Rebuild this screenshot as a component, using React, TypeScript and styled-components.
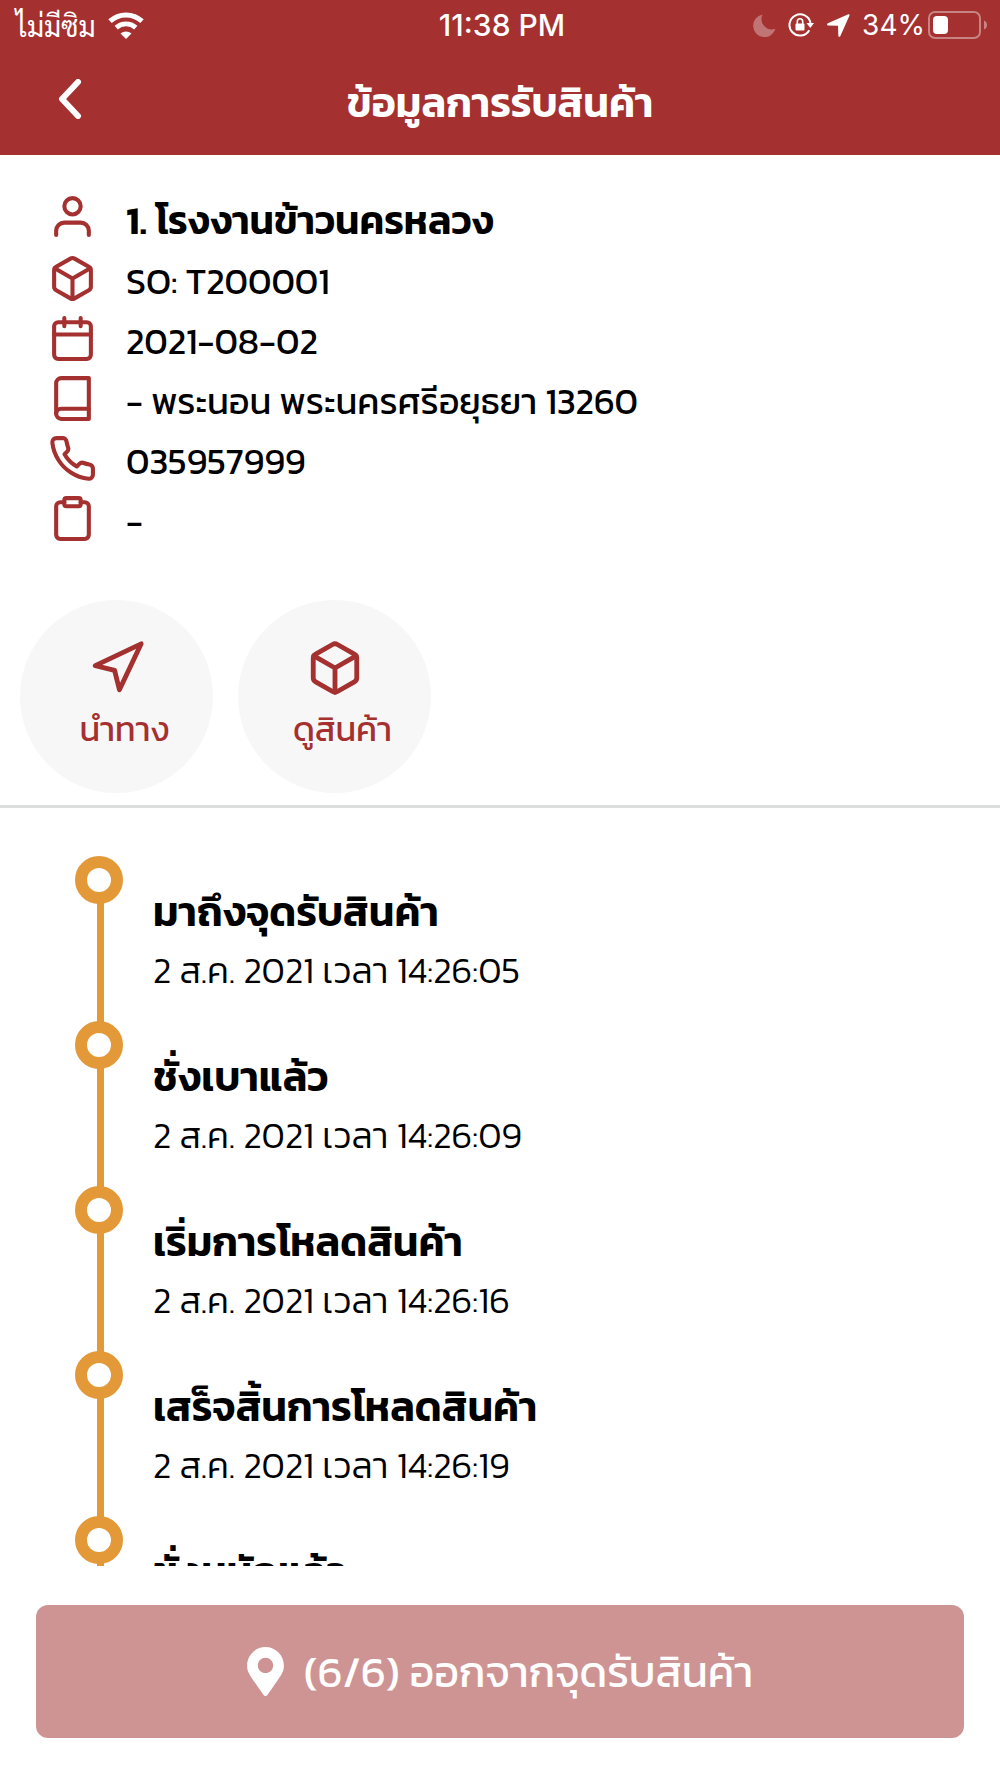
import React from "react";
import styled, { createGlobalStyle } from "styled-components";

const RED = "#a43030";
const ORANGE = "#e39937";
const THAI = `Kanit, Prompt, "Noto Sans Thai", "Noto Sans", sans-serif`;

const GlobalStyle = createGlobalStyle`
  *, *::before, *::after { box-sizing: border-box; }
  body { margin: 0; background: #fff; }
  h1, h2, p, ul, ol { margin: 0; padding: 0; }
  ul, ol { list-style: none; }
  button { border: 0; padding: 0; font: inherit; cursor: pointer; }
`;

const Screen = styled.div`
  display: flex;
  flex-direction: column;
  height: 100vh;
  color: #000;
  background: #fff;
  font-family: ${THAI};
`;

const Header = styled.header`
  flex: none;
  color: #fff;
  background: ${RED};
`;

const StatusBar = styled.div`
  display: grid;
  grid-template-columns: 1fr auto 1fr;
  align-items: center;
  height: 50px;
  padding: 0 12px 0 16px;
  font-family: Inter, "Liberation Sans", sans-serif;
  font-size: 28px;
  line-height: 32px;
`;

const StatusGroup = styled.div<{ $end?: boolean }>`
  display: flex;
  align-items: center;
  justify-content: ${(p) => (p.$end ? "flex-end" : "flex-start")};
  gap: 12px;
`;

const Carrier = styled.span`
  font-family: Sarabun, "Noto Sans", sans-serif;
`;

const Clock = styled.time`
  font-size: 30px;
  font-weight: 500;
`;

const Battery = styled.span`
  display: flex;
  align-items: center;
  gap: 3px;
`;

const TitleBar = styled.div`
  display: grid;
  grid-template-columns: 100px 1fr 100px;
  align-items: center;
  height: 105px;
  padding: 0 20px;
`;

const BackButton = styled.button`
  display: flex;
  align-items: center;
  justify-content: center;
  height: 60px;
  padding-bottom: 8px;
  color: inherit;
  background: none;
`;

const Title = styled.h1`
  font-size: 41px;
  font-weight: 600;
  line-height: 56px;
  text-align: center;
`;

const Info = styled.ul`
  flex: none;
  padding: 37px 48px 0;
`;

const InfoRow = styled.li<{ $lead?: boolean }>`
  display: flex;
  align-items: flex-start;
  gap: 29px;
  height: ${(p) => (p.$lead ? 62 : 60)}px;
  font-size: ${(p) => (p.$lead ? 39 : 36)}px;
  font-weight: ${(p) => (p.$lead ? 600 : 400)};
  line-height: ${(p) => (p.$lead ? 56 : 54)}px;

  svg {
    flex: none;
    color: ${RED};
  }
`;

const Actions = styled.div`
  display: flex;
  flex: none;
  gap: 25px;
  padding: 46px 20px 12px;
  border-bottom: 3px solid #dcdedd;
`;

const RoundAction = styled.button`
  display: flex;
  flex-direction: column;
  align-items: center;
  justify-content: flex-start;
  width: 193px;
  height: 193px;
  padding-top: 39px;
  border-radius: 50%;
  color: ${RED};
  background: #f7f7f7;
  font-size: 34px;
  line-height: 64px;

  span {
    padding-left: 16px;
  }
`;

const Timeline = styled.ol`
  flex: 1;
  min-height: 0;
  padding: 48px 40px 0 75px;
  overflow-y: auto;
  scrollbar-width: none;
`;

const Step = styled.li`
  display: flex;
  gap: 30px;
  min-height: 165px;
`;

const Rail = styled.div`
  display: flex;
  flex: none;
  flex-direction: column;
  align-items: center;
  width: 48px;
`;

const Ring = styled.span`
  width: 48px;
  height: 48px;
  border: 12px solid ${ORANGE};
  border-radius: 50%;
`;

const Line = styled.span`
  flex: 1;
  width: 7px;
  margin: -1px 0 -1px 3px;
  background: ${ORANGE};
`;

const StepBody = styled.div`
  padding-top: 26px;
`;

const StepTitle = styled.h2`
  font-size: 41px;
  font-weight: 600;
  line-height: 60px;
`;

const StepTime = styled.p`
  font-size: 36px;
  font-weight: 300;
  line-height: 56px;
`;

const Footer = styled.footer`
  flex: none;
  padding: 39px 36px 40px;
`;

const LeaveButton = styled.button`
  display: flex;
  align-items: center;
  justify-content: center;
  gap: 20px;
  width: 100%;
  height: 133px;
  border-radius: 12px;
  color: #fff;
  background: #ce9494;
  font-size: 43px;
  line-height: 60px;
`;

const icons = {
  user: (
    <>
      <path d="M20 21v-2a4 4 0 0 0-4-4H8a4 4 0 0 0-4 4v2" />
      <circle cx="12" cy="7" r="4" />
    </>
  ),
  box: (
    <>
      <path d="M21 16V8a2 2 0 0 0-1-1.73l-7-4a2 2 0 0 0-2 0l-7 4A2 2 0 0 0 3 8v8a2 2 0 0 0 1 1.73l7 4a2 2 0 0 0 2 0l7-4A2 2 0 0 0 21 16z" />
      <path d="M3.27 6.96 12 12.01l8.73-5.05M12 22.08V12" />
    </>
  ),
  calendar: (
    <>
      <rect x="3" y="4" width="18" height="18" rx="2" />
      <path d="M16 2v4M8 2v4M3 10h18" />
    </>
  ),
  book: (
    <>
      <path d="M4 19.5A2.5 2.5 0 0 1 6.5 17H20" />
      <path d="M6.5 2H20v20H6.5A2.5 2.5 0 0 1 4 19.5v-15A2.5 2.5 0 0 1 6.5 2z" />
    </>
  ),
  phone: (
    <path d="M22 16.92v3a2 2 0 0 1-2.18 2 19.79 19.79 0 0 1-8.63-3.07 19.5 19.5 0 0 1-6-6 19.79 19.79 0 0 1-3.07-8.67A2 2 0 0 1 4.11 2h3a2 2 0 0 1 2 1.72 12.84 12.84 0 0 0 .7 2.81 2 2 0 0 1-.45 2.11L8.09 9.91a16 16 0 0 0 6 6l1.27-1.27a2 2 0 0 1 2.11-.45 12.84 12.84 0 0 0 2.81.7A2 2 0 0 1 22 16.92z" />
  ),
  clipboard: (
    <>
      <path d="M16 4h2a2 2 0 0 1 2 2v14a2 2 0 0 1-2 2H6a2 2 0 0 1-2-2V6a2 2 0 0 1 2-2h2" />
      <rect x="8" y="2" width="8" height="4" rx="1" />
    </>
  ),
  navigation: <path d="M3 11 22 2l-9 19-2-8-8-2z" />,
};

type IconName = keyof typeof icons;

const Icon = ({ name, size = 49 }: { name: IconName; size?: number }) => (
  <svg
    width={size}
    height={size}
    viewBox="0 0 24 24"
    fill="none"
    stroke="currentColor"
    strokeWidth="2"
    strokeLinecap="round"
    strokeLinejoin="round"
    aria-hidden="true"
  >
    {icons[name]}
  </svg>
);

const WifiIcon = () => (
  <svg width="36" height="27" viewBox="0 0 36 27" fill="none" stroke="#fff" aria-hidden="true">
    <path d="M2 9.200C11 .8 25 .8 34 9.200" strokeWidth="5" />
    <path d="M8.200 15.600c5.600-5 14-5 19.600 0" strokeWidth="4.800" />
    <path d="M18 27l-5.500-5.500c3-2.700 8-2.700 11 0z" fill="#fff" stroke="none" />
  </svg>
);

const MoonIcon = () => (
  <svg width="23" height="23" viewBox="0 0 23 23" aria-hidden="true">
    <path d="M9.500.5A11.400 11.400 0 1 0 22.500 14.800 10.500 10.500 0 0 1 9.500.5z" fill="#c17474" />
  </svg>
);

const RotationLockIcon = () => (
  <svg width="27" height="24" viewBox="0 0 27 24" fill="none" stroke="#fff" aria-hidden="true">
    <path d="M21.300 17.200A10.600 10.600 0 1 1 22.500 10" strokeWidth="2" />
    <path d="M18.500 10H26l-3.700 5z" fill="#fff" stroke="none" />
    <rect x="7.500" y="10.500" width="9" height="7" rx="1" fill="#fff" stroke="none" />
    <path d="M9.300 11V8.500a2.700 2.700 0 0 1 5.400 0V11" strokeWidth="1.600" />
  </svg>
);

const LocationArrowIcon = () => (
  <svg width="23" height="23" viewBox="0 0 23 23" aria-hidden="true">
    <path d="M21.300.3.900 9.300c-1.300.7-1 2 .4 2.100l9.700.4.300 9.800c.1 1.500 1.500 1.700 2.100.4l9.100-20.400c.4-1-.3-1.700-1.200-1.300z" fill="#fff" />
  </svg>
);

const BatteryIcon = () => (
  <svg width="60" height="28" viewBox="0 0 60 28" fill="none" aria-hidden="true">
    <rect x="1" y="1" width="51" height="26" rx="6" stroke="#c88383" strokeWidth="2" />
    <rect x="5" y="5" width="15" height="18" rx="4" fill="#fff" />
    <path d="M56 9.500c4 1.600 4 7.400 0 9z" fill="#c88383" />
  </svg>
);

const BackIcon = () => (
  <svg width="24" height="40" viewBox="0 0 24 40" fill="none" stroke="currentColor" strokeWidth="6" strokeLinecap="round" strokeLinejoin="round" aria-hidden="true">
    <path d="M20 3 4 20l16 17" />
  </svg>
);

const PinIcon = () => (
  <svg width="37" height="49" viewBox="0 0 384 512" fill="currentColor" aria-hidden="true">
    <path d="M172.268 501.670C26.970 291.031 0 269.413 0 192 0 85.961 85.961 0 192 0s192 85.961 192 192c0 77.413-26.970 99.031-172.268 309.670-9.535 13.774-29.930 13.773-39.464 0zM192 272c44.183 0 80-35.817 80-80s-35.817-80-80-80-80 35.817-80 80 35.817 80 80 80z" />
  </svg>
);

const details: { icon: IconName; text: string }[] = [
  { icon: "user", text: "1. โรงงานข้าวนครหลวง" },
  { icon: "box", text: "SO: T200001" },
  { icon: "calendar", text: "2021-08-02" },
  { icon: "book", text: "- พระนอน พระนครศรีอยุธยา 13260" },
  { icon: "phone", text: "035957999" },
  { icon: "clipboard", text: "-" },
];

const steps: { title: string; time?: string }[] = [
  { title: "มาถึงจุดรับสินค้า", time: "2 ส.ค. 2021 เวลา 14:26:05" },
  { title: "ชั่งเบาแล้ว", time: "2 ส.ค. 2021 เวลา 14:26:09" },
  { title: "เริ่มการโหลดสินค้า", time: "2 ส.ค. 2021 เวลา 14:26:16" },
  { title: "เสร็จสิ้นการโหลดสินค้า", time: "2 ส.ค. 2021 เวลา 14:26:19" },
  { title: "ชั่งหนักแล้ว" },
];

export default function App() {
  return (
    <Screen>
      <GlobalStyle />
      <Header>
        <StatusBar>
          <StatusGroup>
            <Carrier>ไม่มีซิม</Carrier>
            <WifiIcon />
          </StatusGroup>
          <Clock>11:38 PM</Clock>
          <StatusGroup $end>
            <MoonIcon />
            <RotationLockIcon />
            <LocationArrowIcon />
            <Battery>
              <span>34%</span>
              <BatteryIcon />
            </Battery>
          </StatusGroup>
        </StatusBar>
        <TitleBar>
          <BackButton type="button" aria-label="กลับ">
            <BackIcon />
          </BackButton>
          <Title>ข้อมูลการรับสินค้า</Title>
        </TitleBar>
      </Header>

      <Info>
        {details.map((row, i) => (
          <InfoRow key={row.icon} $lead={i === 0}>
            <Icon name={row.icon} />
            <span>{row.text}</span>
          </InfoRow>
        ))}
      </Info>

      <Actions>
        <RoundAction type="button">
          <Icon name="navigation" size={58} />
          <span>นำทาง</span>
        </RoundAction>
        <RoundAction type="button">
          <Icon name="box" size={58} />
          <span>ดูสินค้า</span>
        </RoundAction>
      </Actions>

      <Timeline>
        {steps.map((step) => (
          <Step key={step.title}>
            <Rail>
              <Ring />
              <Line />
            </Rail>
            <StepBody>
              <StepTitle>{step.title}</StepTitle>
              {step.time && <StepTime>{step.time}</StepTime>}
            </StepBody>
          </Step>
        ))}
      </Timeline>

      <Footer>
        <LeaveButton type="button">
          <PinIcon />
          <span>(6/6) ออกจากจุดรับสินค้า</span>
        </LeaveButton>
      </Footer>
    </Screen>
  );
}
